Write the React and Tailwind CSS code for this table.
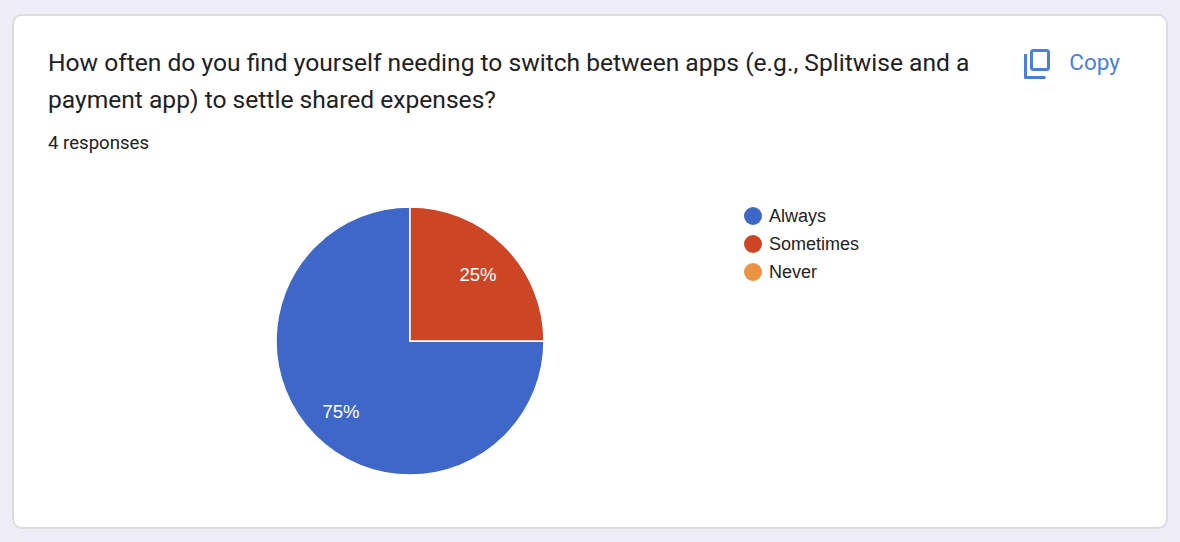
import React from 'react';

// Response summary card for one form question
const slices = [
    { label: 'Always', value: 3, color: '#3f67c8' },
    { label: 'Sometimes', value: 1, color: '#cc4626' },
    { label: 'Never', value: 0, color: '#ec9240' },
];

function CopyIcon() {
    return (
        <svg width="28" height="32" viewBox="0 0 28 32" fill="none" stroke="#4a7fe0" strokeWidth="3">
            <rect x="7.5" y="3.5" width="17" height="19" rx="2" />
            <path d="M1.5 9v23.5h20" strokeLinejoin="round" transform="translate(0 -2)" />
        </svg>
    );
}

function PieChart() {
    // center 135,135 radius 134; red slice from 12 o'clock to 3 o'clock
    return (
        <svg width="270" height="270" viewBox="0 0 270 270">
            <path d="M135 135 L135 1 A134 134 0 1 0 269 135 Z" fill="#3f67c8" stroke="#fff" strokeWidth="1.5" />
            <path d="M135 135 L269 135 A134 134 0 0 0 135 1 Z" fill="#cc4626" stroke="#fff" strokeWidth="1.5" />
            <text x="203" y="75" textAnchor="middle" fill="#fff" fontSize="18.5" fontFamily="Arial, 'Liberation Sans', sans-serif">25%</text>
            <text x="66" y="212" textAnchor="middle" fill="#fff" fontSize="18.5" fontFamily="Arial, 'Liberation Sans', sans-serif">75%</text>
        </svg>
    );
}

function App() {
    return (
        <div className="min-h-[542px] bg-[#efedf8] pt-[14px] px-[12px] pb-[13px]" style={{ fontFamily: "Roboto, 'Liberation Sans', sans-serif" }}>
            <div className="h-[515px] rounded-[10px] border-2 border-[#dadce0] bg-white pl-[34px] pr-[46px] pt-[28px]">
                {/* Header */}
                <div className="flex items-start justify-between">
                    <h2 className="w-[950px] text-[24.6px] leading-[37px] text-[#202124]">
                        How often do you find yourself needing to switch between apps (e.g., Splitwise and a payment app) to settle shared expenses?
                    </h2>
                    <button className="mt-[2px] flex items-center gap-[17px] text-[22.5px] text-[#4a7fe0]">
                        <CopyIcon />
                        <span>Copy</span>
                    </button>
                </div>
                <div className="mt-[14px] text-[18.6px] leading-[22px] text-[#202124]">4 responses</div>

                {/* Chart */}
                <div className="mt-[52px] flex items-start">
                    <div className="ml-[227px]">
                        <PieChart />
                    </div>
                    <ul className="ml-[199px] mt-[-4px] flex flex-col" style={{ fontFamily: "Arial, 'Liberation Sans', sans-serif" }}>
                        {slices.map((s) => (
                            <li key={s.label} className="flex h-[28px] items-center gap-[7px] text-[18px] text-[#222]">
                                <span className="h-[18px] w-[18px] rounded-full" style={{ backgroundColor: s.color }} />
                                {s.label}
                            </li>
                        ))}
                    </ul>
                </div>
            </div>
        </div>
    );
}

export default App;
